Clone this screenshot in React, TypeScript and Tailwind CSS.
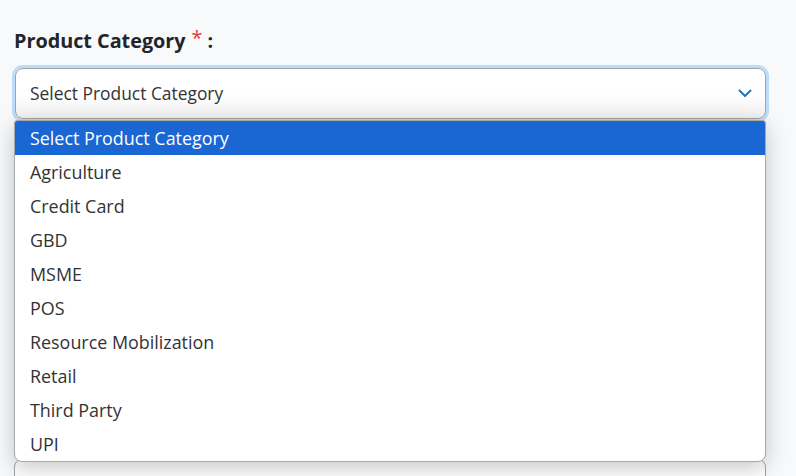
import React from "react";

const categories = [
  "Select Product Category",
  "Agriculture",
  "Credit Card",
  "GBD",
  "MSME",
  "POS",
  "Resource Mobilization",
  "Retail",
  "Third Party",
  "UPI",
];

function FieldLabel({ text }: { text: string }) {
  return (
    <label className="block text-[19.8px] leading-[27px] font-bold text-[#212529]">
      {text}
      <span className="relative -top-[3px] text-[#e53935] font-normal ml-[6px]">*</span>
      <span className="ml-[5px]">:</span>
    </label>
  );
}

function Chevron() {
  return (
    <svg width="14" height="9" viewBox="0 0 14 9" fill="none">
      <path d="M1.5 1.5 L7 7 L12.5 1.5" stroke="#1e76c2" strokeWidth="2" strokeLinecap="round" strokeLinejoin="round" />
    </svg>
  );
}

export default function App() {
  return (
    <div
      className="h-[476px] w-full bg-[#f8f9fb] pl-[14px] pr-[30px] pt-[27px] overflow-hidden"
      style={{ fontFamily: '"Open Sans", "Noto Sans", sans-serif' }}
    >
      {/* Product Category */}
      <div className="relative z-10">
        <FieldLabel text="Product Category" />
        <div className="relative mt-[14px] ml-[1px]">
          <div className="flex h-[51px] items-center justify-between rounded-[8px] border border-[#a3a3a3] bg-gradient-to-b from-white via-white to-[#f1f1f1] pl-[14px] pr-[13px] ring-[3px] ring-[#bcdcfb]">
            <span className="text-[17.4px] text-[#333]">Select Product Category</span>
            <Chevron />
          </div>

          {/* Open dropdown list */}
          <ul className="absolute left-[-1px] right-0 top-[52px] overflow-hidden rounded-b-[8px] rounded-t-[3px] border border-[#a8a8a8] bg-white shadow-[0_6px_22px_rgba(0,0,0,0.22)]">
            {categories.map((c, i) => (
              <li
                key={c}
                className={`flex h-[34px] items-center pl-[15px] text-[17.9px] ${
                  i === 0 ? "bg-[#1a66d2] text-white" : "text-[#333]"
                }`}
              >
                {c}
              </li>
            ))}
          </ul>
        </div>
      </div>

      {/* Fields behind the dropdown */}
      <div className="mt-[52px]">
        <FieldLabel text="Sub Category" />
        <div className="mt-[17px] flex h-[47px] items-center rounded-[8px] border border-[#a3a3a3] bg-white pl-[15px] text-[17.4px] text-[#333]">
          Select Sub Category
        </div>
      </div>

      <div className="mt-[158px]">
        <FieldLabel text="Product Name" />
        <div className="mt-[12px] flex h-[47px] items-start rounded-[8px] border border-[#a3a3a3] bg-white pl-[36px] pt-[10px] text-[17.4px] text-[#333]">
          Select Product
        </div>
      </div>
    </div>
  );
}
